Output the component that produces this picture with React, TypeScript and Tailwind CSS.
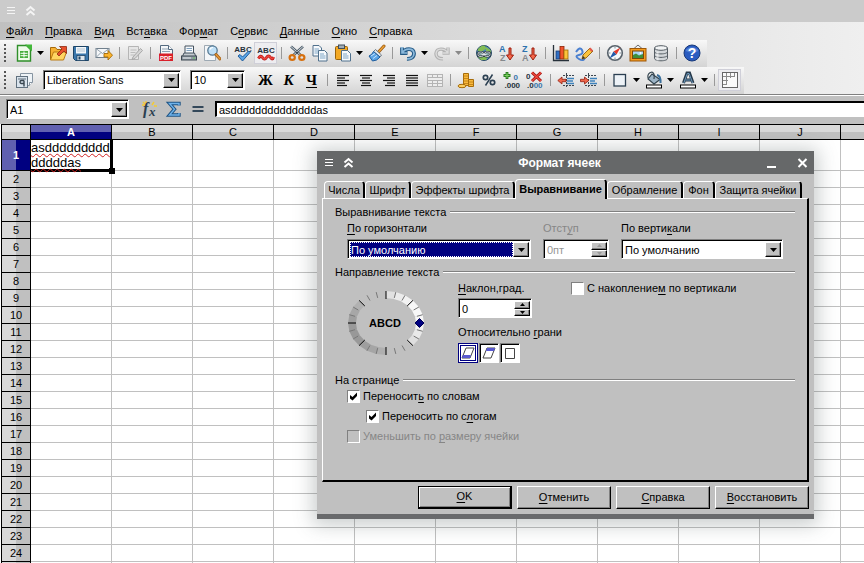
import React from 'react';

const sunken =
  'border border-t-[#808080] border-l-[#808080] border-r-white border-b-white bg-white shadow-[inset_1px_1px_0_#000]';
const raised =
  'border border-t-white border-l-white border-r-black border-b-black bg-[#c0c0c0] shadow-[inset_-1px_-1px_0_#808080]';

/* Text with one mnemonic letter, marked by a preceding underscore. */
function Mnemonic({ text }: { text: string }) {
  const i = text.indexOf('_');
  if (i < 0) return <>{text}</>;
  return (
    <span>
      {text.slice(0, i)}
      <span className="underline underline-offset-2">{text[i + 1]}</span>
      {text.slice(i + 2)}
    </span>
  );
}

function Svg({ children, size = 18 }: { children: React.ReactNode; size?: number }) {
  return (
    <svg width={size} height={size} viewBox="0 0 18 18" fill="none" className="block shrink-0" aria-hidden="true">
      {children}
    </svg>
  );
}

function Lines({ rows, color = '#111' }: { rows: number[][]; color?: string }) {
  return (
    <g stroke={color} strokeWidth="1.2">
      {rows.map(([x1, x2, y], i) => (
        <path key={i} d={`M${x1} ${y}H${x2}`} />
      ))}
    </g>
  );
}

const svgFont = 'Liberation Sans, Arial, sans-serif';

const icons: Record<string, React.ReactNode> = {
  new: (
    <Svg>
      <path d="M2.5 1.5h9l4 4v11.5h-13z" fill="#eefbe9" stroke="#2f8f2a" strokeWidth="1.4" />
      <path d="M10 .5h7v7z" fill="#43b83a" />
      <rect x="5" y="7" width="8" height="7" fill="#47ad3d" />
      <path d="M5.5 9.3h7M5.5 11.7h7M9 7.5v6" stroke="#fff" />
    </Svg>
  ),
  open: (
    <Svg>
      <path d="M1.5 15.5v-12h5l1.5 2h5v3" fill="#f7b234" stroke="#a66a0b" />
      <path d="M1.5 16l3-8h13l-3 8z" fill="#ffd562" stroke="#b97a12" />
      <path d="M8 10l5-5-2.500-2.500h7v7L15 7l-5 5z" fill="#e8502a" stroke="#8e2a10" strokeWidth=".8" />
    </Svg>
  ),
  save: (
    <Svg>
      <path d="M1.500 2.500h15v14h-13l-2-2z" fill="#3c78ad" stroke="#1d4466" />
      <rect x="4" y="3" width="10" height="6.500" fill="#f3f7fa" />
      <path d="M5 5h8M5 7h8" stroke="#b3c4d2" />
      <rect x="5" y="11.500" width="8" height="5" fill="#dfe6ec" stroke="#1d4466" strokeWidth=".8" />
      <rect x="6.500" y="12.500" width="2" height="3" fill="#1d4466" />
    </Svg>
  ),
  mail: (
    <Svg>
      <rect x="1" y="4.500" width="13" height="9" fill="#f5f7f9" stroke="#71808d" />
      <path d="M1 4.500l6.500 5 6.500-5M1 13.500l5-5M14 13.500l-5-5" stroke="#8a98a5" strokeWidth=".9" />
      <path d="M9 9.500h4v-3l4.500 4.700L13 16v-3H9z" fill="#fbb42c" stroke="#a46a08" strokeWidth=".9" />
    </Svg>
  ),
  edit: (
    <Svg>
      <path d="M2.500 2.500h10v13h-10z" fill="#e6e6e6" stroke="#b5b5b5" />
      <path d="M4.500 6h6M4.500 8.500h5M4.500 11h4" stroke="#bcbcbc" />
      <path d="M7 13l7.500-8.500 2 2L9 14.500l-3 1z" fill="#d5d5d5" stroke="#a8a8a8" />
    </Svg>
  ),
  pdf: (
    <Svg>
      <path d="M3.500 1.500h8l4 4V16h-12z" fill="#f4f6f8" stroke="#536a80" />
      <path d="M5 5h6M5 7.500h8" stroke="#8da1b3" />
      <path d="M11.500 1.500v4h4" fill="#fff" stroke="#536a80" />
      <rect x="2" y="9.500" width="14" height="7.500" fill="#d9202a" />
      <text x="9" y="15.700" fontFamily={svgFont} fontWeight="bold" fontSize="6" fill="#fff" textAnchor="middle">PDF</text>
    </Svg>
  ),
  print: (
    <Svg>
      <path d="M5 9V2h8.500v7" fill="#f6f9fc" stroke="#45525e" />
      <path d="M6.500 4.500H12M6.500 6.500H12" stroke="#7fa0bd" />
      <path d="M1.500 14.500l2.500-5.500h10.500l2 5.500z" fill="#c3cad0" stroke="#45525e" />
      <rect x="1.500" y="12" width="15" height="4" fill="#939da6" stroke="#3d4852" />
      <path d="M3 14h8" stroke="#e9eef2" />
      <circle cx="14" cy="14" r=".8" fill="#5bd04f" />
    </Svg>
  ),
  preview: (
    <Svg>
      <path d="M1.500 1.500h9l2 2v13h-11z" fill="#f4f6f8" stroke="#9da9b3" />
      <circle cx="9.500" cy="6.500" r="4.700" fill="#bfe0f7" stroke="#547791" strokeWidth="1.300" />
      <path d="M7 5.500a3 3 0 0 1 3-2" stroke="#fff" strokeWidth="1.200" />
      <path d="M13 10.500l4 4.500" stroke="#a55f14" strokeWidth="3" strokeLinecap="round" />
      <path d="M13 10.500l4 4.500" stroke="#e89b3a" strokeWidth="1.200" strokeLinecap="round" />
    </Svg>
  ),
  spell: (
    <Svg>
      <text x="9" y="7.500" fontFamily={svgFont} fontWeight="bold" fontSize="8" fill="#26323c" textAnchor="middle">ABC</text>
      <path d="M4 12l2-1.500 2.500 2.500L14.500 7 16 8.500l-7.500 8.500z" fill="#5aa4e6" stroke="#1f5c9c" />
    </Svg>
  ),
  autospell: (
    <Svg>
      <text x="9" y="9" fontFamily={svgFont} fontWeight="bold" fontSize="8" fill="#26323c" textAnchor="middle">ABC</text>
      <path d="M1.500 14.500q2-4 4 -1t4 0t4 0t3-.5" stroke="#b81818" strokeWidth="3" />
      <path d="M1.500 14.500q2-4 4 -1t4 0t4 0t3-.5" stroke="#f1453c" strokeWidth="1.400" />
    </Svg>
  ),
  cut: (
    <Svg>
      <path d="M3 2.500l10 9M15 2.500l-10 9" stroke="#53616d" strokeWidth="2.600" />
      <path d="M3 2.500l10 9M15 2.500l-10 9" stroke="#cfd8df" strokeWidth="1" />
      <ellipse cx="4.200" cy="13.500" rx="2.600" ry="2.400" stroke="#d6700f" strokeWidth="2.200" />
      <ellipse cx="13.800" cy="13.500" rx="2.600" ry="2.400" stroke="#d6700f" strokeWidth="2.200" />
      <circle cx="9" cy="8.500" r="1" fill="#2c3640" />
    </Svg>
  ),
  copy: (
    <Svg>
      <path d="M2 1.500h6l2.500 2.500v8H2z" fill="#f6f9fc" stroke="#50718d" />
      <path d="M3.500 5h4.500M3.500 7h5M3.500 9h5" stroke="#7fa6c6" />
      <path d="M7.500 6.500h6l2.500 2.500v8H7.500z" fill="#f6f9fc" stroke="#50718d" />
      <path d="M9 10h4M9 12h5.500M9 14h5.500" stroke="#7fa6c6" />
    </Svg>
  ),
  paste: (
    <Svg>
      <rect x="1.500" y="2.500" width="12" height="13" rx="1" fill="#f3a924" stroke="#9b640b" />
      <rect x="4.500" y="1" width="6" height="3.500" fill="#a1adb7" stroke="#414e59" />
      <path d="M7.500 6.500h6l3 3v7.500h-9z" fill="#f6f9fc" stroke="#50718d" />
      <path d="M9 10h4M9 12h5.500M9 14h5.500" stroke="#7fa6c6" />
    </Svg>
  ),
  brush: (
    <Svg>
      <path d="M10.500 8l5.500-6" stroke="#9a5a10" strokeWidth="3" strokeLinecap="round" />
      <path d="M10.500 8l5.500-6" stroke="#f0a53a" strokeWidth="1.400" strokeLinecap="round" />
      <path d="M7.500 5.500l6 5.500-1.500 2L5.500 7.500z" fill="#dfe6ec" stroke="#53616d" strokeWidth=".8" />
      <path d="M5.500 7.500l6.500 5.500q-3 4-7.500 4L1 12q3-1 4.500-4.500z" fill="#5aa4e6" stroke="#1f5c9c" />
      <path d="M3 12l4-2.500M5 14.500l4-3" stroke="#c7e2fa" />
    </Svg>
  ),
  undo: (
    <Svg>
      <path d="M3 3.500v5.700h5.500M3.500 8.700C6 4 14.500 3.500 15 9.500c0 4-3.500 5.500-7 5.300" stroke="#245a86" strokeWidth="3.800" />
      <path d="M3 3v6h5M3.500 8.700C6 4 14.500 3.500 15 9.500c0 4-3.500 5.500-7 5.300" stroke="#8bb9dc" strokeWidth="1.700" />
    </Svg>
  ),
  redo: (
    <Svg>
      <path d="M15 3.500v5.500h-5.500M14.500 8.700C12 4 3.500 3.500 3 9.500c0 4 3.500 5.500 7 5.300" stroke="#b2b2b2" strokeWidth="3.400" />
      <path d="M15 3.500v5.500h-5.500M14.500 8.700C12 4 3.500 3.500 3 9.500c0 4 3.500 5.500 7 5.300" stroke="#dcdcdc" strokeWidth="1.400" />
    </Svg>
  ),
  globe: (
    <Svg>
      <circle cx="9" cy="9" r="7.500" fill="#4c86b8" stroke="#274a63" />
      <path d="M2.500 6q3-5 7-4.500l2 3-3 2-4 2zM11 3l4.500 3 .5 3-5-1zM3 13l5-1 5 1-2 3H6z" fill="#82bd54" />
      <rect x="3" y="8" width="5.500" height="4.500" rx="2" fill="#8aa" stroke="#26313a" strokeWidth="2" />
      <rect x="9.500" y="8" width="5.500" height="4.500" rx="2" fill="#8aa" stroke="#26313a" strokeWidth="2" />
      <rect x="3" y="8" width="5.500" height="4.500" rx="2" stroke="#e8eef2" strokeWidth=".8" />
      <rect x="9.500" y="8" width="5.500" height="4.500" rx="2" stroke="#e8eef2" strokeWidth=".8" />
      <path d="M6.500 10.300h5" stroke="#e8eef2" strokeWidth="1.200" />
    </Svg>
  ),
  sortAZ: (
    <Svg>
      <text x="1" y="8" fontFamily={svgFont} fontWeight="bold" fontSize="9" fill="#2c72ae">A</text>
      <text x="2" y="17" fontFamily={svgFont} fontWeight="bold" fontSize="9" fill="#85898d">Z</text>
      <path d="M11 4h2v7h2.500L12 16l-3.500-5H11z" fill="#f3674b" stroke="#9d2010" />
    </Svg>
  ),
  sortZA: (
    <Svg>
      <text x="1" y="8" fontFamily={svgFont} fontWeight="bold" fontSize="9" fill="#2c72ae">Z</text>
      <text x="1" y="17" fontFamily={svgFont} fontWeight="bold" fontSize="9" fill="#85898d">A</text>
      <path d="M11 4h2v7h2.500L12 16l-3.500-5H11z" fill="#f3674b" stroke="#9d2010" />
    </Svg>
  ),
  chart: (
    <Svg>
      <path d="M1.500 1v15.500H17" stroke="#27313a" strokeWidth="1.300" />
      <rect x="4" y="7" width="4" height="8" fill="#2f6fc4" stroke="#173d75" strokeWidth=".8" />
      <rect x="8" y="2.500" width="4" height="12.500" fill="#f0532b" stroke="#8c2307" strokeWidth=".8" />
      <rect x="12" y="6" width="4" height="9" fill="#fcc33b" stroke="#9c6a05" strokeWidth=".8" />
    </Svg>
  ),
  draw: (
    <Svg>
      <path d="M1 8q4-6 6-2t-3 5 0 4 6-2" stroke="#4b80d0" strokeWidth="2" />
      <path d="M7 15l1-4 7-7 3 3-7 7z" fill="#fcc33b" stroke="#8e600b" strokeWidth=".9" />
      <path d="M14 5l1.500-1.500 2.500 3L16.500 8z" fill="#e4594d" />
      <path d="M7 15l1-3 2 2z" fill="#333" />
    </Svg>
  ),
  compass: (
    <Svg>
      <circle cx="9" cy="9" r="7.300" fill="#f5f8fa" stroke="#59636c" strokeWidth="1.600" />
      <path d="M9 2.500v2M9 13.500v2M2.500 9h2M13.500 9h2" stroke="#87919a" />
      <path d="M14.500 3.500L10.500 10.500 7.500 7.500z" fill="#e23a2c" />
      <path d="M3.500 14.500L7.500 7.500l3 3z" fill="#235cab" />
    </Svg>
  ),
  image: (
    <Svg>
      <path d="M5 4.500L9 1l4 3.500" stroke="#6b6b6b" />
      <rect x="1" y="4.500" width="16" height="12.500" fill="#f39b1e" stroke="#9d5708" />
      <rect x="3.500" y="7" width="11" height="7.500" fill="#a8d4f2" stroke="#7d4707" />
      <path d="M4 14v-3l3-1.500 3 2 4-1.500v4z" fill="#3f8f3a" />
      <circle cx="11.500" cy="9" r="1" fill="#fff" />
    </Svg>
  ),
  database: (
    <Svg>
      <path d="M2.500 4v10.500c0 1.400 3 2.300 6.500 2.300s6.500-.9 6.500-2.300V4" fill="#d2d6d9" stroke="#555d64" />
      <ellipse cx="9" cy="4" rx="6.500" ry="2.300" fill="#f2f4f5" stroke="#555d64" />
      <path d="M2.500 7.700c0 1.300 3 2.200 6.500 2.200s6.500-.9 6.500-2.200M2.500 11.200c0 1.300 3 2.200 6.500 2.200s6.500-.9 6.500-2.200" stroke="#555d64" />
      <path d="M5 7.500v9M6 7.500v9" stroke="#fff" strokeOpacity=".6" />
    </Svg>
  ),
  help: (
    <Svg>
      <circle cx="9" cy="9" r="8" fill="#2a5cc0" stroke="#173878" />
      <path d="M2.500 7a7 6 0 0 1 13 0q-6 3-13 0z" fill="#6e97e4" fillOpacity=".6" />
      <text x="9" y="14" fontFamily={svgFont} fontWeight="bold" fontSize="14" fill="#fff" textAnchor="middle">?</text>
    </Svg>
  ),
  styles: (
    <Svg>
      <path d="M5.500 2.500h12v9l-3 3h-9z" fill="#eef3f7" stroke="#8694a1" />
      <path d="M14.500 14.500v-3h3" fill="#fff" stroke="#8694a1" />
      <rect x="1.500" y="5.500" width="11" height="11" fill="#d9e3ec" stroke="#60707e" />
      <path d="M3 8h8" stroke="#60707e" />
      <path d="M9 9.500v6M9 9.500H6.500a1.500 1.500 0 0 0 0 3H9" stroke="#38454f" strokeWidth="1.400" />
    </Svg>
  ),
  left: <Svg><Lines rows={[[3, 15, 4.500], [3, 11, 7], [3, 15, 9.500], [3, 11, 12], [3, 13, 14.500]]} /></Svg>,
  center: <Svg><Lines rows={[[3, 15, 4.500], [5, 13, 7], [3, 15, 9.500], [5, 13, 12], [4, 14, 14.500]]} /></Svg>,
  right: <Svg><Lines rows={[[3, 15, 4.500], [7, 15, 7], [3, 15, 9.500], [7, 15, 12], [5, 15, 14.500]]} /></Svg>,
  justify: <Svg><Lines rows={[[3, 15, 4.500], [3, 15, 7], [3, 15, 9.500], [3, 15, 12], [3, 15, 14.500]]} /></Svg>,
  merge: (
    <Svg>
      <rect x="1.500" y="3.500" width="15" height="12" fill="#ededed" stroke="#b4b4b4" />
      <path d="M1.500 6.500h15M1.500 9.500h15M1.500 12.500h15M6.500 3.500v3M11.500 3.500v3M6.500 9.500v6M11.500 9.500v6" stroke="#b4b4b4" />
    </Svg>
  ),
  coins: (
    <Svg>
      <path d="M6.500 2.500h5v12h-5z" fill="#f9b93c" stroke="#a66c0a" />
      <path d="M6.500 5h5M6.500 7.500h5M6.500 10h5M6.500 12.500h5" stroke="#b97a12" strokeWidth=".8" />
      <path d="M11.500 8.500h5v7h-5z" fill="#f9b93c" stroke="#a66c0a" />
      <path d="M11.500 11h5M11.500 13.500h5" stroke="#b97a12" strokeWidth=".8" />
      <ellipse cx="5" cy="15" rx="4" ry="1.700" fill="#fdcf63" stroke="#a66c0a" />
    </Svg>
  ),
  percent: (
    <Svg>
      <circle cx="5.500" cy="6.500" r="2.200" stroke="#2b3f51" strokeWidth="1.700" />
      <circle cx="12.500" cy="11.500" r="2.200" stroke="#2b3f51" strokeWidth="1.700" />
      <path d="M12.500 3.500l-7 11" stroke="#2b3f51" strokeWidth="1.500" />
    </Svg>
  ),
  addDec: (
    <Svg>
      <path d="M4 1v7M.5 4.500h7" stroke="#2b7d1f" strokeWidth="2.800" />
      <path d="M4 2v5M1.500 4.500h5" stroke="#7fd565" strokeWidth="1" />
      <text x="10.500" y="8.500" fontFamily={svgFont} fontWeight="bold" fontSize="8" fill="#3a76ab">0</text>
      <text x="1.500" y="16.500" fontFamily={svgFont} fontWeight="bold" fontSize="8" fill="#26323c">.000</text>
    </Svg>
  ),
  delDec: (
    <Svg>
      <text x="0" y="8" fontFamily={svgFont} fontWeight="bold" fontSize="8" fill="#26323c">0</text>
      <text x="1" y="16.500" fontFamily={svgFont} fontWeight="bold" fontSize="8" fill="#26323c">.0<tspan fill="#3a76ab">00</tspan></text>
      <path d="M6 1.500l9 8.500M15 1.500L6 10" stroke="#a3120e" strokeWidth="3" />
      <path d="M6 1.500l9 8.500M15 1.500L6 10" stroke="#f04b3f" strokeWidth="1.200" />
    </Svg>
  ),
  dedent: (
    <Svg>
      <path d="M9.500 2v14.500M6 4.500h11M6 14.500h11" stroke="#3c4650" strokeDasharray="2 1" />
      <path d="M10 7.500h7M10 10h6M10 12.500h7" stroke="#3f83bd" strokeWidth="1.500" />
      <path d="M.8 9.500L5 6v2.300h4v2.400H5V13z" fill="#f0664a" stroke="#932010" strokeWidth=".8" />
    </Svg>
  ),
  indent: (
    <Svg>
      <path d="M8.500 2v14.500M5 4.500h12M5 14.500h12" stroke="#3c4650" strokeDasharray="2 1" />
      <path d="M10 7.500h7M10 10h5M10 12.500h7" stroke="#3f83bd" strokeWidth="1.500" />
      <path d="M8.800 9.500L4.500 6v2.300h-4v2.400h4V13z" fill="#f0664a" stroke="#932010" strokeWidth=".8" />
    </Svg>
  ),
  border: (
    <Svg>
      <rect x="3" y="3.500" width="11.500" height="11.500" fill="#edf2f7" stroke="#2b3f51" strokeWidth="1.300" />
    </Svg>
  ),
  fill: (
    <Svg>
      <path d="M7 3l8 5.500-6 4.500L3 8z" fill="#9db4c6" stroke="#33444f" strokeWidth="1.200" />
      <path d="M3 7q-1-5 4-6 3 1 2 7" stroke="#33444f" strokeWidth="1.200" />
      <path d="M12 4q4 1 3.500 8" stroke="#3a6f9b" strokeWidth="2" />
      <rect x="1.500" y="14" width="15" height="3" fill="#fff" stroke="#000" />
    </Svg>
  ),
  fontColor: (
    <Svg>
      <path d="M4.500 12L8 2h2.500L14 12M6 9h6.500" stroke="#26394a" strokeWidth="3" />
      <path d="M4.800 12L8.300 2.500h1.800L13.600 12M6.500 9h5" stroke="#6f9abd" strokeWidth="1" />
      <rect x="1.500" y="14" width="15" height="3" fill="#fff" stroke="#000" />
    </Svg>
  ),
  grid: (
    <Svg>
      <rect x="1.500" y="1.500" width="15" height="15" fill="#fafafa" stroke="#666" />
      <path d="M5.500 2v12M9.500 2v5M13.500 2v3M2 5.500h12M2 9.500h5M2 13.500h3" stroke="#8b8b8b" />
    </Svg>
  ),
  fx: (
    <Svg>
      <path d="M2 2l3 3M5 1v3M1 5h3M13 2l-2 3M16 6h-3" stroke="#f4cb32" strokeWidth="1.400" />
      <text x="2" y="13.500" fontFamily="Liberation Serif, serif" fontStyle="italic" fontWeight="bold" fontSize="16" fill="#2b3f51">f</text>
      <text x="8" y="16" fontFamily="Liberation Serif, serif" fontStyle="italic" fontWeight="bold" fontSize="13" fill="#2b3f51">x</text>
    </Svg>
  ),
  sigma: (
    <Svg>
      <path d="M14 5.500V3.500H4.500l5 5.700-5 5.800H14V13" stroke="#1d5384" strokeWidth="3.400" />
      <path d="M14 5.500V3.500H4.500l5 5.700-5 5.800H14V13" stroke="#6fb3ea" strokeWidth="1.400" />
    </Svg>
  ),
  equals: (
    <Svg>
      <path d="M3.500 7h11M3.500 11h11" stroke="#34485a" strokeWidth="1.800" />
    </Svg>
  ),
};

const sep = 'sep';
const drop = 'drop';
const grayDrop = 'grayDrop';
type Item = string | [string, string];

const standardBar: Item[] = [
  ['new', 'Создать'], drop, ['open', 'Открыть'], ['save', 'Сохранить'], ['mail', 'Отправить'], sep,
  ['edit', 'Правка файла'], sep, ['pdf', 'Экспорт в PDF'], ['print', 'Печать'], ['preview', 'Просмотр'], sep,
  ['spell', 'Орфография'], ['autospell', 'Автопроверка'], sep, ['cut', 'Вырезать'], ['copy', 'Копировать'],
  ['paste', 'Вставить'], drop, ['brush', 'Кисть'], sep, ['undo', 'Отменить действие'], drop,
  ['redo', 'Повторить'], grayDrop, sep, ['globe', 'Гиперссылка'], ['sortAZ', 'По возрастанию'],
  ['sortZA', 'По убыванию'], sep, ['chart', 'Диаграмма'], ['draw', 'Рисование'], sep, ['compass', 'Навигатор'],
  ['image', 'Галерея'], ['database', 'Источники данных'], sep, ['help', 'Справка'],
];

const formatBar: Item[] = [
  sep, ['left', 'По левому краю'], ['center', 'По центру'], ['right', 'По правому краю'],
  ['justify', 'По ширине'], ['merge', 'Объединить'], sep, ['coins', 'Денежный'], ['percent', 'Процентный'],
  ['addDec', 'Добавить разряд'], ['delDec', 'Удалить разряд'], sep, ['dedent', 'Уменьшить отступ'],
  ['indent', 'Увеличить отступ'], sep, ['border', 'Обрамление'], drop, ['fill', 'Цвет фона'], drop,
  ['fontColor', 'Цвет шрифта'], drop, sep, ['grid', 'Сетка'],
];

function Triangle({ gray = false }: { gray?: boolean }) {
  return (
    <svg width="7" height="4" viewBox="0 0 7 4" className="block" aria-hidden="true">
      <path d="M0 0h7L3.500 4z" fill={gray ? '#8a8a8a' : '#000'} />
    </svg>
  );
}

function ToolItems({ items }: { items: Item[] }) {
  return (
    <>
      {items.map((it, i) => {
        if (it === sep)
          return (
            <span key={i} className="flex w-2 shrink-0 justify-center">
              <span className="h-3 w-px bg-[#999]" />
            </span>
          );
        if (it === drop || it === grayDrop)
          return (
            <button key={i} type="button" aria-label="Список" className="flex h-5 w-[11px] shrink-0 items-center justify-center">
              <Triangle gray={it === grayDrop} />
            </button>
          );
        const active = it[0] === 'autospell' || it[0] === 'grid';
        return (
          <button
            key={i}
            type="button"
            aria-label={it[1]}
            className={`flex h-[22px] w-[23px] shrink-0 items-center justify-center ${active ? 'border border-[#cfcfd8] bg-[#ededf0]' : ''}`}
          >
            {icons[it[0]]}
          </button>
        );
      })}
    </>
  );
}

function Handle() {
  return (
    <span className="flex w-3 shrink-0 flex-col items-start gap-[2px] pl-1">
      {[0, 1, 2, 3, 4].map((n) => (
        <span key={n} className="size-[2px] bg-[#555]" />
      ))}
    </span>
  );
}

function Select({ value, label, id, className = '', selected = false }: {
  value: string; label?: string; id?: string; className?: string; selected?: boolean;
}) {
  return (
    <span className={`flex h-5 shrink-0 p-[2px] pr-px pb-px ${sunken} ${className}`}>
      <span className="relative flex min-w-0 flex-1">
        <select
          id={id}
          aria-label={label}
          className={`w-full appearance-none rounded-none pr-4 pl-px outline-none ${selected ? 'bg-[#000080] text-white' : 'bg-white'}`}
        >
          <option>{value}</option>
        </select>
        {selected && <span className="pointer-events-none absolute inset-y-0 right-4 left-0 border border-dotted border-white" />}
        <span className={`pointer-events-none absolute inset-y-0 right-0 flex w-4 items-center justify-center ${raised}`}>
          <Triangle />
        </span>
      </span>
    </span>
  );
}

function Spin({ value, id, className, disabled = false }: { value: string; id: string; className: string; disabled?: boolean }) {
  const color = disabled ? '#999' : '#000';
  return (
    <span className={`flex h-5 p-[2px] pr-px pb-px ${sunken} ${className}`}>
      <input id={id} defaultValue={value} disabled={disabled} className={`w-0 min-w-0 flex-1 pl-px ${disabled ? 'text-[#969696]' : ''}`} />
      <span className="flex w-4 shrink-0 flex-col">
        {['M0 3h5L2.500 0z', 'M0 0h5L2.500 3z'].map((d, i) => (
          <button key={d} type="button" disabled={disabled} aria-label={i ? 'Меньше' : 'Больше'} className={`flex min-h-0 flex-1 items-center justify-center ${raised}`}>
            <svg width="5" height="3" viewBox="0 0 5 3"><path d={d} fill={color} /></svg>
          </button>
        ))}
      </span>
    </span>
  );
}

function Check({ text, checked = false, disabled = false, className = '' }: {
  text: string; checked?: boolean; disabled?: boolean; className?: string;
}) {
  return (
    <label className={`flex h-[14px] items-center gap-[3px] ${disabled ? 'text-[#868686]' : ''} ${className}`}>
      <span className="relative size-[13px] shrink-0">
        <input
          type="checkbox"
          defaultChecked={checked}
          disabled={disabled}
          className={`peer block size-[13px] appearance-none border border-t-[#808080] border-l-[#808080] border-r-white border-b-white ${disabled ? 'bg-[#c0c0c0]' : 'bg-white'}`}
        />
        <svg viewBox="0 0 13 13" className="pointer-events-none absolute inset-0 hidden peer-checked:block" aria-hidden="true">
          <path d="M3 5v3.500l2.500 2L10 6V2.500L5.500 7z" fill="#000" />
        </svg>
      </span>
      <Mnemonic text={text} />
    </label>
  );
}

function Group({ title }: { title: string }) {
  return (
    <div className="flex h-[14px] items-center gap-1">
      <h3>{title}</h3>
      <span className="h-[2px] flex-1 border-t border-[#808080] bg-white" />
    </div>
  );
}

/* Rotation dial: 24 shaded ring segments with a tick at each boundary. */
function Dial() {
  const point = (deg: number, rx: number, ry: number) => {
    const a = (deg * Math.PI) / 180;
    return `${(39 + rx * Math.sin(a)).toFixed(1)} ${(33 - ry * Math.cos(a)).toFixed(1)}`;
  };
  const steps = Array.from({ length: 24 }, (_, i) => i * 15);
  return (
    <svg width="78" height="66" viewBox="0 0 78 66" className="block" role="img" aria-label="Наклон текста">
      {steps.map((d) => {
        const v = Math.round(200 + 48 * Math.cos(((d + 7 - 65) * Math.PI) / 180));
        const flat = (d > 130 && d < 180) || d > 310;
        return (
          <path
            key={d}
            d={`M${point(d, 38, 32)}L${point(d + 15, 38, 32)}L${point(d + 15, 30, 25)}L${point(d, 30, 25)}z`}
            fill={flat ? '#c0c0c0' : `rgb(${v},${v},${v})`}
          />
        );
      })}
      {steps.map((d) => (
        <path
          key={d}
          d={`M${point(d, 38, 32)}L${point(d, d % 45 ? 32 : 30, d % 45 ? 26 : 24)}`}
          stroke={d % 45 ? '#777' : '#000'}
        />
      ))}
      <path d="M68 33l4.500-4.500L77 33l-4.500 4.500z" fill="#000080" stroke="#000050" />
      <text x="38" y="37" textAnchor="middle" fontFamily={svgFont} fontWeight="bold" fontSize="11" fill="#000">ABCD</text>
    </svg>
  );
}

const edges = [
  { label: 'От нижней грани', art: <><path d="M7 4h8l-4 10H3z" fill="#fff" stroke="#444" /><path d="M4 11h8l-1 3H3z" fill="#5a5ad0" /></> },
  { label: 'От верхней грани', art: <><path d="M7 4h8l-4 10H3z" fill="#fff" stroke="#444" /><path d="M7 4h8l-1 3H6z" fill="#5a5ad0" /></> },
  { label: 'Внутри ячейки', art: <path d="M4.500 4.500h9v10h-9z" fill="#fff" stroke="#444" /> },
];

const tabs = [
  ['Числа', 'w-[41px]'],
  ['Шрифт', 'w-[46px]'],
  ['Эффекты шрифта', 'w-[104px]'],
  ['Выравнивание', 'w-[92px]'],
  ['Обрамление', 'w-[76px]'],
  ['Фон', 'w-8'],
  ['Защита ячейки', 'w-[87px]'],
];

function WindowMarks({ color }: { color: string }) {
  return (
    <svg width="30" height="12" viewBox="0 0 30 12" stroke={color} fill="none" aria-hidden="true">
      <path d="M0 2.500h8M0 5.500h8M0 8.500h8" />
      <path d="M19.500 5.500l4-3.500 4 3.500M19.500 10l4-3.500 4 3.500" strokeWidth="2" />
    </svg>
  );
}

function FormatDialog() {
  return (
    <section
      role="dialog"
      aria-labelledby="dialog-title"
      className="absolute top-[151px] left-[317px] w-[497px] border-b-[5px] border-[#696a6c] bg-[#c0c0c0] shadow-[0_2px_18px_4px_rgba(60,75,75,0.28)]"
    >
      <header className="grid h-[23px] grid-cols-[60px_1fr_60px] items-center bg-[#666869] text-white">
        <span className="pl-2"><WindowMarks color="#fff" /></span>
        <h2 id="dialog-title" className="pr-3 text-center text-[12px] font-bold">Формат ячеек</h2>
        <span className="flex items-center justify-end gap-5 pr-[6px]">
          <button type="button" aria-label="Свернуть">
            <svg width="11" height="12" viewBox="0 0 11 12"><path d="M1 10h9" stroke="#fff" strokeWidth="2" /></svg>
          </button>
          <button type="button" aria-label="Закрыть">
            <svg width="11" height="12" viewBox="0 0 11 12"><path d="M1.500 2l8 8M9.500 2l-8 8" stroke="#fff" strokeWidth="2" /></svg>
          </button>
        </span>
      </header>
      <div className="px-[5px] pt-[5px] pb-[5px]">
        <div role="tablist" className="flex h-[19px] items-end pl-[2px]">
          {tabs.map(([t, width]) => {
            const on = t === 'Выравнивание';
            return (
              <button
                key={t}
                type="button"
                role="tab"
                aria-selected={on}
                className={`shrink-0 rounded-t-sm border border-r-2 border-b-0 border-white border-r-black bg-[#c0c0c0] whitespace-nowrap ${width} ${
                  on ? 'z-10 -mb-px h-5 pb-px font-bold' : 'h-[17px]'
                }`}
              >
                {t}
              </button>
            );
          })}
        </div>
        <div role="tabpanel" className="h-[284px] border border-r-2 border-b-2 border-white border-r-black border-b-black pt-[6px] pr-3 pl-3">
          <Group title="Выравнивание текста" />
          <div className="flex pl-3 pt-[2px]">
            <div className="flex w-[196px] flex-col gap-1">
              <label htmlFor="horizontal" className="h-[14px]"><Mnemonic text="_По горизонтали" /></label>
              <Select id="horizontal" value="По умолчанию" selected className="w-[184px]" />
            </div>
            <div className="flex w-[78px] flex-col gap-1">
              <label htmlFor="indent" className="h-[14px] text-[#868686]"><Mnemonic text="Отст_уп" /></label>
              <Spin id="indent" value="0пт" disabled className="w-[66px]" />
            </div>
            <div className="flex flex-col gap-1">
              <label htmlFor="vertical" className="h-[14px]"><Mnemonic text="По верти_кали" /></label>
              <Select id="vertical" value="По умолчанию" className="w-[162px]" />
            </div>
          </div>
          <div className="pt-[6px]"><Group title="Направление текста" /></div>
          <div className="flex pl-3 pt-[2px]">
            <div className="w-[111px] pt-[9px]"><Dial /></div>
            <div className="flex w-[113px] flex-col">
              <label htmlFor="angle" className="h-[14px]"><Mnemonic text="_Наклон,град." /></label>
              <Spin id="angle" value="0" className="mt-[3px] w-[74px]" />
              <span className="mt-[7px] h-[14px] whitespace-nowrap"><Mnemonic text="Относительно _грани" /></span>
              <div className="mt-1 flex gap-px">
                {edges.map((e, i) => (
                  <button
                    key={e.label}
                    type="button"
                    aria-label={e.label}
                    className={`flex size-5 items-center justify-center ${i === 0 ? 'border border-[#000080] bg-white shadow-[inset_0_0_0_1px_#fff,inset_0_0_0_2px_#000080]' : sunken}`}
                  >
                    <svg width="18" height="18" viewBox="0 0 18 18" className="shrink-0">{e.art}</svg>
                  </button>
                ))}
              </div>
            </div>
            <Check text="С накопление_м по вертикали" />
          </div>
          <div className="pt-[10px]"><Group title="На странице" /></div>
          <div className="flex flex-col gap-[6px] pl-3 pt-[2px]">
            <Check text="Переносит_ь по словам" checked />
            <Check text="Переносить по с_логам" checked className="pl-[19px]" />
            <Check text="Уменьшить по _размеру ячейки" disabled />
          </div>
        </div>
        <footer className="flex justify-end gap-[5px] pt-1">
          {['_OK', '_Отменить', '_Справка', '_Восстановить'].map((b, i) => (
            <button key={b} type="button" className={`h-[23px] w-[94px] pb-[2px] ${i === 0 ? 'border border-r-2 border-b-2 border-black bg-[#c0c0c0] shadow-[inset_1px_1px_0_#fff,inset_-1px_-1px_0_#808080]' : raised}`}>
              <Mnemonic text={b} />
            </button>
          ))}
        </footer>
      </div>
    </section>
  );
}

const columns = ['A', 'B', 'C', 'D', 'E', 'F', 'G', 'H', 'I', 'J', ''];
const rows = Array.from({ length: 25 }, (_, i) => i + 1);
const squiggle = 'underline decoration-[#d02020] decoration-wavy decoration-1 underline-offset-1';

function Sheet() {
  return (
    <div className="min-h-0 flex-1 overflow-hidden bg-white">
      <table className="ml-px w-[921px] table-fixed border-separate border-spacing-0 text-center leading-3">
        <colgroup>
          <col className="w-[30px]" />
          {columns.map((c) => <col key={c} className="w-[81px]" />)}
        </colgroup>
        <thead>
          <tr className="h-4">
            <th className="border border-black bg-linear-to-b from-[#dedede] from-50% to-[#cccccc] to-50% p-0" />
            {columns.map((c) => (
              <th
                key={c}
                scope="col"
                className={`border border-l-0 border-black p-0 ${c === 'A' ? 'bg-linear-to-b from-[#6060b0] from-50% to-[#000080] to-50% font-bold text-white' : 'bg-linear-to-b from-[#d9d9d9] from-50% to-[#c0c0c0] to-50% font-normal'}`}
              >
                {c}
              </th>
            ))}
          </tr>
        </thead>
        <tbody>
          {rows.map((r) => (
            <tr key={r} className={r === 1 ? 'h-[31px]' : 'h-[17px]'}>
              <th
                scope="row"
                className={`border border-t-0 border-black p-0 pb-px ${r === 1 ? 'bg-linear-to-r from-[#6060b0] from-50% to-[#000080] to-50% font-bold text-white' : 'bg-linear-to-r from-[#d9d9d9] from-50% to-[#c0c0c0] to-50% font-normal'}`}
              >
                {r < rows.length ? r : ''}
              </th>
              {columns.map((c) =>
                r === 1 && c === 'A' ? (
                  <td key={c} className="relative border-r border-b border-black p-0 text-left align-top text-[13px] leading-[15px] whitespace-nowrap shadow-[inset_-1px_-1px_0_#000,0_1px_0_#000,1px_0_0_#000]">
                    <div className={`h-[30px] ${squiggle}`}>asddddddddd<br />dddddas</div>
                    <span className="absolute -right-1 -bottom-1 size-[6px] bg-black" />
                  </td>
                ) : (
                  <td key={c} className="border-r border-b border-[#c0c0c0] p-0" />
                ),
              )}
            </tr>
          ))}
        </tbody>
      </table>
    </div>
  );
}

const menus = ['_Файл', '_Правка', '_Вид', 'Вст_авка', 'Фор_мат', 'С_ервис', '_Данные', '_Окно', '_Справка'];
const barFill = 'bg-linear-to-b from-[#f8f8f8] to-[#d4d4d4]';

export default function App() {
  return (
    <main className="relative flex h-screen flex-col overflow-hidden bg-[#c0c0c0] font-['Liberation_Sans',Arial,sans-serif] text-[11px] leading-[14px] text-black">
      <div className="flex h-[22px] shrink-0 items-center bg-[#cbcbcb] pl-[7px]">
        <WindowMarks color="#f4f4f4" />
      </div>
      <div className="shrink-0 border-b border-[#808080] bg-linear-to-r from-[#c0c0c0] to-[#efefef]">
        <nav className="flex h-[18px] items-center gap-3 pl-[6px]">
          {menus.map((m) => (
            <button key={m} type="button"><Mnemonic text={m} /></button>
          ))}
        </nav>
        <div className={`flex h-[27px] w-[707px] items-center pb-[2px] ${barFill}`}>
          <Handle />
          <ToolItems items={standardBar} />
        </div>
        <div className={`flex h-[27px] w-[744px] items-center pb-[2px] ${barFill}`}>
          <Handle />
          <button type="button" aria-label="Стили" className="flex w-[23px] justify-center">{icons.styles}</button>
          <Select label="Гарнитура" value="Liberation Sans" className="ml-2 w-[138px]" />
          <Select label="Кегль" value="10" className="ml-[9px] mr-[9px] w-[55px]" />
          {[['Ж', 'Полужирный', ''], ['К', 'Курсив', 'italic'], ['Ч', 'Подчёркнутый', 'underline underline-offset-2']].map(([t, l, c]) => (
            <button key={t} type="button" aria-label={l} className={`w-[23px] font-['Liberation_Serif',serif] text-[15px] font-bold ${c}`}>{t}</button>
          ))}
          <ToolItems items={formatBar} />
        </div>
      </div>
      <div className="flex h-[29px] shrink-0 items-center border-t border-white pb-[2px] pl-[6px]">
        <Select label="Область листа" value="A1" className="w-[123px]" />
        <div className="ml-[9px] flex w-[77px] items-center">
          {[['fx', 'Мастер функций'], ['sigma', 'Сумма'], ['equals', 'Функция']].map(([n, l]) => (
            <button key={n} type="button" aria-label={l} className="flex w-6 justify-center">{icons[n]}</button>
          ))}
        </div>
        <input aria-label="Строка ввода" defaultValue="asddddddddddddddas" className="h-4 min-w-0 flex-1 border-t-2 border-b border-l-2 border-black border-b-white bg-white pl-[2px]" />
      </div>
      <Sheet />
      <FormatDialog />
    </main>
  );
}
